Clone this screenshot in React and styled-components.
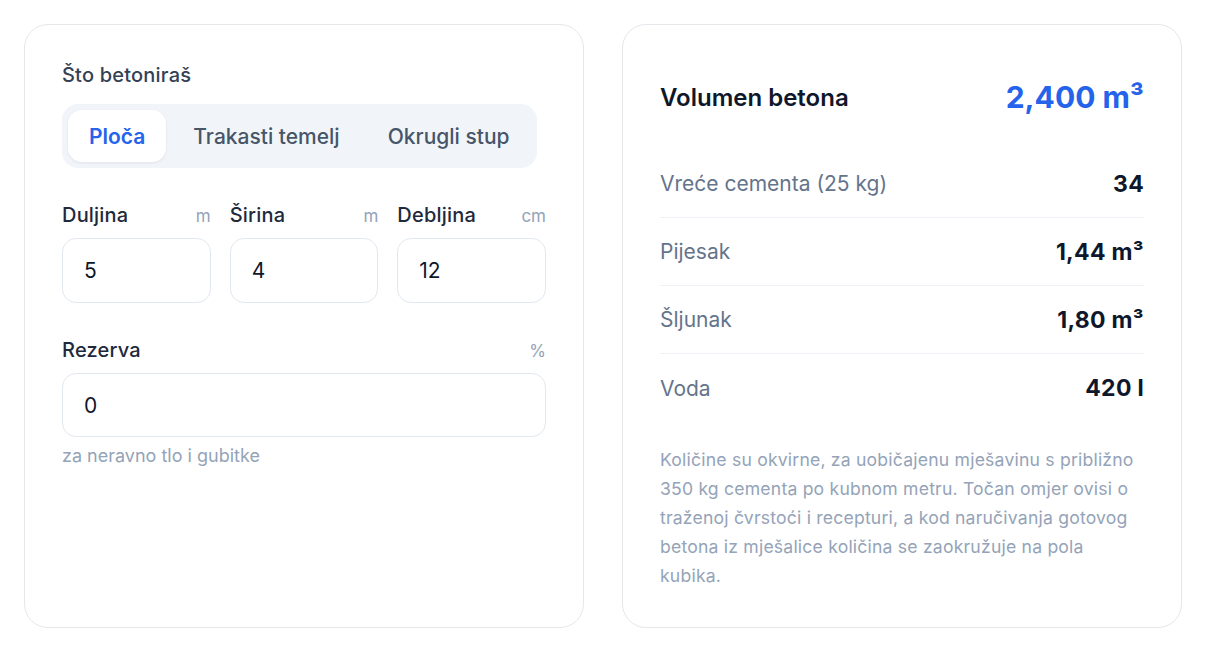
import React, { useState } from 'react';
import styled, { createGlobalStyle } from 'styled-components';

const GlobalStyle = createGlobalStyle`
  * { box-sizing: border-box; }
  body {
    margin: 0;
    background: #ffffff;
    font-family: 'Inter', 'Noto Sans', sans-serif;
    -webkit-font-smoothing: antialiased;
  }
`;

const Page = styled.div`
  display: grid;
  grid-template-columns: 1fr 1fr;
  gap: 38px;
  padding: 24px;
  align-items: stretch;
`;

const Card = styled.section`
  background: #ffffff;
  border: 1px solid #e5e7eb;
  border-radius: 24px;
  padding: 37px;
`;

const Section = styled.div`
  margin-bottom: 35px;
`;

const Heading = styled.div`
  font-size: 20px;
  line-height: 26px;
  font-weight: 500;
  letter-spacing: 0.2px;
  color: #334155;
  margin-bottom: 16px;
`;

const Segmented = styled.div`
  display: inline-flex;
  gap: 6px;
  padding: 6px;
  background: #f1f5f9;
  border-radius: 16px;
`;

const Tab = styled.button`
  border: none;
  font-family: inherit;
  font-size: 21px;
  font-weight: ${p => (p.$active ? 600 : 500)};
  height: 52px;
  padding: 0 21px;
  border-radius: 14px;
  cursor: pointer;
  color: ${p => (p.$active ? '#2563eb' : '#475569')};
  background: ${p => (p.$active ? '#ffffff' : 'transparent')};
  box-shadow: ${p => (p.$active ? '0 1px 3px rgba(15, 23, 42, 0.08)' : 'none')};
`;

const FieldGrid = styled.div`
  display: grid;
  grid-template-columns: repeat(3, 1fr);
  gap: 19px;
`;

const Field = styled.label`
  display: flex;
  flex-direction: column;
`;

const LabelRow = styled.div`
  display: flex;
  justify-content: space-between;
  align-items: baseline;
  margin-bottom: 10px;
  line-height: 24px;
`;

const LabelText = styled.span`
  font-size: 20px;
  font-weight: 500;
  letter-spacing: 0.2px;
  color: #1e293b;
`;

const Unit = styled.span`
  font-size: 17px;
  color: #94a3b8;
`;

const Input = styled.input`
  width: 100%;
  height: ${p => p.$h || 65}px;
  border: 1px solid #e2e8f0;
  border-radius: 14px;
  padding: 0 21px;
  font-family: inherit;
  font-size: 21px;
  color: #0f172a;
  background: #ffffff;
  outline: none;
`;

const Hint = styled.div`
  margin-top: 8px;
  font-size: 18px;
  line-height: 22px;
  color: #94a3b8;
`;

const ResultHead = styled.div`
  display: flex;
  justify-content: space-between;
  align-items: center;
  padding: 18px 0 36px;
`;

const ResultTitle = styled.h2`
  margin: 0;
  font-size: 24px;
  font-weight: 600;
  color: #0f172a;
`;

const ResultValue = styled.div`
  font-size: 30px;
  line-height: 34px;
  font-weight: 700;
  color: #2563eb;
`;

const Row = styled.div`
  display: flex;
  justify-content: space-between;
  align-items: center;
  height: 68px;
  border-bottom: ${p => (p.$last ? 'none' : '1px solid #eef1f5')};
`;

const RowLabel = styled.span`
  font-size: 21px;
  color: #64748b;
`;

const RowValue = styled.span`
  font-size: 23px;
  font-weight: 700;
  letter-spacing: 0.3px;
  color: #0f172a;
`;

const Note = styled.p`
  margin: 23px 0 0;
  font-size: 17.6px;
  line-height: 29px;
  letter-spacing: 0.2px;
  color: #94a3b8;
`;

const tabs = ['Ploča', 'Trakasti temelj', 'Okrugli stup'];

const dims = [
  { label: 'Duljina', unit: 'm', value: '5' },
  { label: 'Širina', unit: 'm', value: '4' },
  { label: 'Debljina', unit: 'cm', value: '12' },
];

const results = [
  { label: 'Vreće cementa (25 kg)', value: '34' },
  { label: 'Pijesak', value: '1,44 m³' },
  { label: 'Šljunak', value: '1,80 m³' },
  { label: 'Voda', value: '420 l' },
];

export default function App() {
  const [active, setActive] = useState(0);

  return (
    <>
      <GlobalStyle />
      <Page>
        <Card>
          <Section>
            <Heading>Što betoniraš</Heading>
            <Segmented>
              {tabs.map((t, i) => (
                <Tab key={t} $active={i === active} onClick={() => setActive(i)}>
                  {t}
                </Tab>
              ))}
            </Segmented>
          </Section>

          <Section>
            <FieldGrid>
              {dims.map(d => (
                <Field key={d.label}>
                  <LabelRow>
                    <LabelText>{d.label}</LabelText>
                    <Unit>{d.unit}</Unit>
                  </LabelRow>
                  <Input defaultValue={d.value} />
                </Field>
              ))}
            </FieldGrid>
          </Section>

          <Field>
            <LabelRow>
              <LabelText>Rezerva</LabelText>
              <Unit>%</Unit>
            </LabelRow>
            <Input $h={64} defaultValue="0" />
          </Field>
          <Hint>za neravno tlo i gubitke</Hint>
        </Card>

        <Card>
          <ResultHead>
            <ResultTitle>Volumen betona</ResultTitle>
            <ResultValue>2,400 m³</ResultValue>
          </ResultHead>
          {results.map((r, i) => (
            <Row key={r.label} $last={i === results.length - 1}>
              <RowLabel>{r.label}</RowLabel>
              <RowValue>{r.value}</RowValue>
            </Row>
          ))}
          <Note>
            Količine su okvirne, za uobičajenu mješavinu s približno 350 kg cementa po
            kubnom metru. Točan omjer ovisi o traženoj čvrstoći i recepturi, a kod
            naručivanja gotovog betona iz mješalice količina se zaokružuje na pola kubika.
          </Note>
        </Card>
      </Page>
    </>
  );
}
